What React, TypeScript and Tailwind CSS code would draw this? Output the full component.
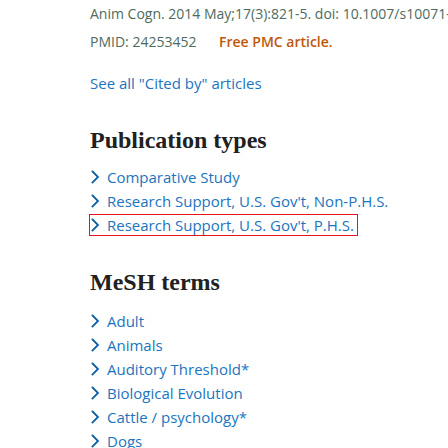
const pubTypes = [
  'Comparative Study',
  "Research Support, U.S. Gov't, Non-P.H.S.",
  "Research Support, U.S. Gov't, P.H.S.",
];

const meshTerms = [
  'Adult',
  'Animals',
  'Auditory Threshold*',
  'Biological Evolution',
  'Cattle / psychology*',
  'Dogs',
];

function Chevron() {
  return (
    <svg viewBox="0 0 14 24" className="w-[14px] h-[24px] shrink-0" fill="none" stroke="#0b5fa8" strokeWidth="1.8">
      <path d="M2.5 6.5 L8 12 L2.5 17.5" strokeLinecap="square" />
    </svg>
  );
}

function Item({ label, active }: { label: string; active?: boolean }) {
  return (
    <li className="h-[24px] flex items-center">
      <span className={`inline-flex items-center h-[20px] gap-[3px] pr-[3px] ${active ? 'outline outline-1 outline-[#e8131b]' : ''}`}>
        <Chevron />
        <span className="text-[#1b75c0]">{label}</span>
      </span>
    </li>
  );
}

export default function App() {
  return (
    <div className="h-[448px] w-[448px] overflow-hidden bg-white pl-[90px] whitespace-nowrap font-['Open_Sans',sans-serif]">
      <div className="text-[14px] leading-[28px] text-[#4e6b5d]">
        <div>Anim Cogn. 2014 May;17(3):821-5. doi: 10.1007/s10071-013-0709-7. Epub 2013 Nov 19.</div>
        <div className="flex">
          <span className="w-[129px]">PMID: 24253452</span>
          <span className="text-[#c0580b] font-semibold">Free PMC article.</span>
        </div>
      </div>

      <a className="block mt-[15px] text-[15px] leading-[24px] text-[#1b75c0]">See all "Cited by" articles</a>

      <h2 className="mt-[30px] text-[24px] leading-[30px] font-bold text-[#212121] font-['Liberation_Serif',serif]">Publication types</h2>
      <ul className="mt-[10px] text-[15px]">
        {pubTypes.map((t, i) => (
          <Item key={i} label={t} active={i === 2} />
        ))}
      </ul>

      <h2 className="mt-[30px] text-[24px] leading-[30px] font-bold text-[#212121] font-['Liberation_Serif',serif]">MeSH terms</h2>
      <ul className="mt-[12px] text-[15px]">
        {meshTerms.map((t, i) => (
          <Item key={i} label={t} />
        ))}
      </ul>
    </div>
  );
}
